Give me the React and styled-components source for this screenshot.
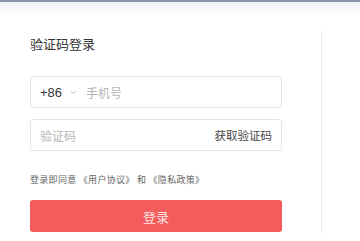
import React from "react";
import styled, { createGlobalStyle } from "styled-components";

const GlobalStyle = createGlobalStyle`
    html, body {
        margin: 0;
        padding: 0;
        background: #fff;
        font-family: "Noto Sans CJK SC", "Liberation Sans", sans-serif;
    }
`;

const Page = styled.div`
    width: 360px;
    height: 241px;
    box-sizing: border-box;
    border-top: 2px solid #8797a8;
    background: linear-gradient(#eef3f7 0px, #fff 14px);
    padding-top: 28px;
    overflow: hidden;
`;

const Panel = styled.div`
    width: 322px;
    box-sizing: border-box;
    padding: 5px 39px 1px 30px;
    border-right: 1px solid #ececec;
`;

const Title = styled.h2`
    margin: 0;
    font-size: 13px;
    line-height: 18px;
    font-weight: 400;
    color: #333;
`;

const Field = styled.div`
    display: flex;
    align-items: center;
    height: 32px;
    box-sizing: border-box;
    margin-top: ${(props) => props.gap || 11}px;
    padding: 0 9px 0 9px;
    border: 1px solid #e4e4e4;
    border-radius: 3px;
    font-size: 12px;
    color: #333;
`;

const Code = styled.span`
    display: flex;
    align-items: center;
    gap: 8px;
    margin-right: 9px;
    font-family: "Liberation Sans", sans-serif;
    font-size: 13px;
`;

const Placeholder = styled.span`
    flex: 1;
    color: #b5b5b5;
`;

const Action = styled.span`
    font-size: 11.5px;
    color: #444;
`;

const Agree = styled.p`
    margin: 22px 0 0;
    font-size: 9px;
    line-height: 14px;
    letter-spacing: 0.3px;
    color: #666;
    white-space: pre;
`;

const Button = styled.button`
    display: block;
    width: 100%;
    height: 32px;
    margin-top: 13px;
    border: 0;
    border-radius: 3px;
    background: #f65b5c;
    color: #ffe4e4;
    font-family: inherit;
    font-size: 13px;
`;

const Chevron = () => (
    <svg width="7" height="5" viewBox="0 0 7 5">
        <path d="M1 1 L3.5 3.5 L6 1" fill="none" stroke="#bbb" strokeWidth="1" />
    </svg>
);

const App = () => {
    return (
        <Page>
            <GlobalStyle />
            <Panel>
                <Title>验证码登录</Title>
                <Field gap={23}>
                    <Code>
                        +86 <Chevron />
                    </Code>
                    <Placeholder>手机号</Placeholder>
                </Field>
                <Field>
                    <Placeholder>验证码</Placeholder>
                    <Action>获取验证码</Action>
                </Field>
                <Agree>登录即同意 《用户协议》 和 《隐私政策》</Agree>
                <Button>登录</Button>
            </Panel>
        </Page>
    );
};

export default App;
